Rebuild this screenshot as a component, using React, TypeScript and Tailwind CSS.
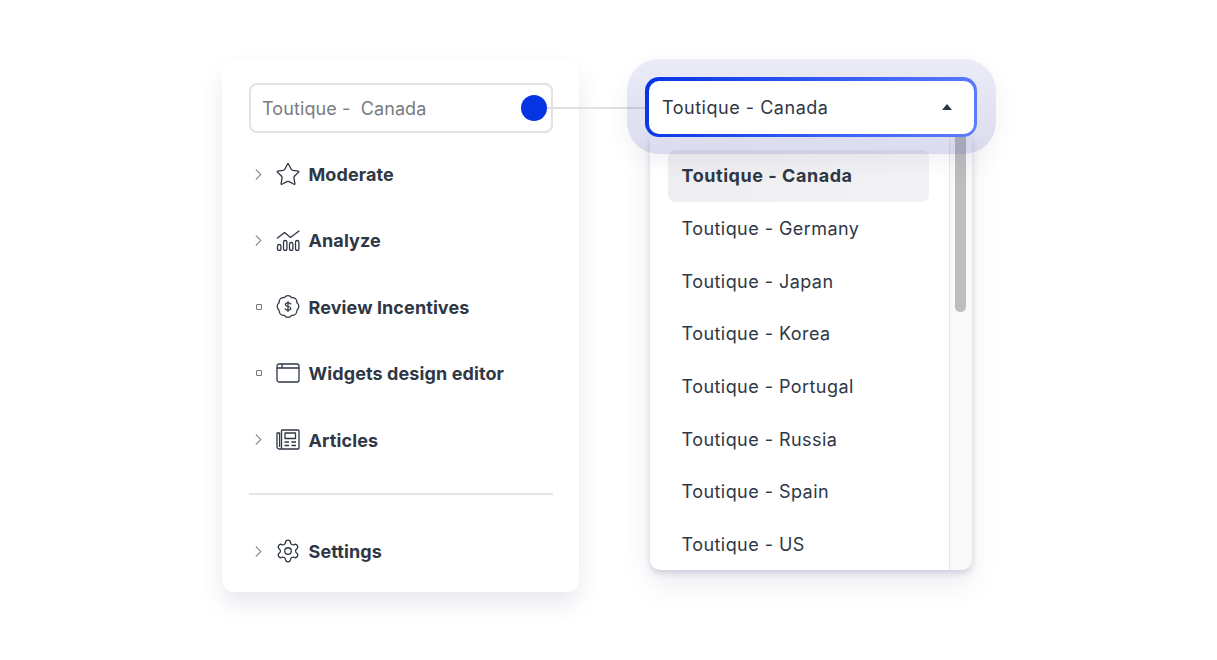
import { ChevronRight, Settings, Star } from 'lucide-react'
import type { ReactNode } from 'react'

const COUNTRIES = ['Germany', 'Japan', 'Korea', 'Portugal', 'Russia', 'Spain', 'US']

function AnalyzeIcon() {
  return (
    <svg width="24" height="21" viewBox="0 0 24 21" fill="none" stroke="#2f3745" strokeWidth="1.3" strokeLinecap="round" strokeLinejoin="round">
      <path d="M1.5 8 L8.5 2.5 L14.5 7.5 L23 1" />
      <rect x="1.5" y="14.5" width="3.4" height="6" rx="1.7" />
      <rect x="7.5" y="10.5" width="3.4" height="10" rx="1.7" />
      <rect x="13.5" y="12.5" width="3.4" height="8" rx="1.7" />
      <rect x="19.5" y="10.5" width="3.4" height="10" rx="1.7" />
    </svg>
  )
}

function BadgeIcon() {
  return (
    <svg width="27" height="27" viewBox="0 0 24 24" fill="none" stroke="#2f3745" strokeWidth="1.15" strokeLinecap="round" strokeLinejoin="round">
      <path d="M3.85 8.62a4 4 0 0 1 4.78-4.77 4 4 0 0 1 6.74 0 4 4 0 0 1 4.78 4.78 4 4 0 0 1 0 6.74 4 4 0 0 1-4.77 4.78 4 4 0 0 1-6.75 0 4 4 0 0 1-4.78-4.77 4 4 0 0 1 0-6.76Z" />
      <path d="M14.6 9.7c-.5-.7-1.4-1.1-2.6-1.1-1.4 0-2.4.6-2.4 1.7 0 2.3 5 1.1 5 3.4 0 1.1-1.1 1.7-2.6 1.7-1.2 0-2.1-.5-2.6-1.2M12 7.4v9.2" />
    </svg>
  )
}

function WindowIcon() {
  return (
    <svg width="24" height="20" viewBox="0 0 24 20" fill="none" stroke="#2f3745" strokeWidth="1.3" strokeLinejoin="round">
      <rect x="1" y="1" width="22" height="18" rx="2" />
      <path d="M1 5 H23 M6 1 V5" />
    </svg>
  )
}

function ArticlesIcon() {
  return (
    <svg width="24" height="21" viewBox="0 0 24 21" fill="none" stroke="#2f3745" strokeWidth="1.3" strokeLinejoin="round">
      <path d="M5.5 1 H22 a1 1 0 0 1 1 1 V19 a1 1 0 0 1 -1 1 H3 a2 2 0 0 1 -2 -2 V4 H3.6 V18" />
      <path d="M5.5 1 V20" />
      <rect x="9" y="4" width="10.5" height="5.5" />
      <path d="M8.5 13 H13 M15.5 13 H20 M8.5 16.5 H13 M15.5 16.5 H20" />
    </svg>
  )
}

function NavRow({ icon, label, leaf }: { icon: ReactNode; label: string; leaf?: boolean }) {
  return (
    <div className="flex h-[66.4px] items-center">
      <div className="flex w-[19px] justify-center">
        {leaf ? (
          <span className="h-[6px] w-[6px] rounded-[1px] border border-[#73777e]" />
        ) : (
          <ChevronRight size={19} strokeWidth={1.3} className="text-[#5f636b]" />
        )}
      </div>
      <div className="ml-[7px] flex w-[26px] justify-center">{icon}</div>
      <span className="ml-[7.5px] mt-[1.5px] text-[18px] font-bold leading-none tracking-[0.1px] text-[#2f3745]">{label}</span>
    </div>
  )
}

export default function App() {
  return (
    <div className="relative flex h-[660px] w-[1217px] items-start overflow-hidden bg-white pl-[222px] pt-[60px] font-['Inter',sans-serif]">
      {/* Left nav card */}
      <div className="h-[532px] w-[357px] rounded-[12px] bg-white pl-[27px] pr-[26px] pt-[23px] shadow-[0_12px_24px_-2px_rgba(70,75,130,0.14)]">
        <div className="flex h-[50px] items-center justify-between rounded-[8px] border-2 border-[#e2e2e6] pl-[11px] pr-[4px]">
          <span className="whitespace-pre text-[18px] tracking-[0.1px] text-[#797b81]">Toutique -  Canada</span>
          <span className="h-[26px] w-[26px] rounded-full bg-[#0535e3]" />
        </div>
        <div className="mt-[8px]">
          <NavRow label="Moderate" icon={<Star size={27} strokeWidth={1.2} className="text-[#2f3745]" />} />
          <NavRow label="Analyze" icon={<AnalyzeIcon />} />
          <NavRow label="Review Incentives" leaf icon={<BadgeIcon />} />
          <NavRow label="Widgets design editor" leaf icon={<WindowIcon />} />
          <NavRow label="Articles" icon={<ArticlesIcon />} />
        </div>
        <div className="mt-[20px] h-[2px] bg-[#e4e4e8]" />
        <div className="mt-[23px]">
          <NavRow label="Settings" icon={<Settings size={26} strokeWidth={1.2} className="text-[#2f3745]" />} />
        </div>
      </div>

      {/* Connector from the dot to the select */}
      <div className="absolute left-[547px] top-[107px] h-[2px] w-[98px] bg-[#dfdfe4]" />

      {/* Select + dropdown */}
      <div className="ml-[66px] mt-[17px] w-[332px]">
        <div className="relative z-10">
          <div className="absolute -bottom-[17px] -left-[18px] -right-[19px] -top-[18px] rounded-[32px] bg-[linear-gradient(180deg,rgba(75,80,195,0.11),rgba(70,75,165,0.2))] shadow-[0_8px_22px_rgba(70,75,130,0.07)]" />
          <div className="relative h-[60px] rounded-[14px] bg-[linear-gradient(110deg,#0535e3,#5f7dff)] p-[3.5px]">
            <div className="flex h-full items-center justify-between rounded-[10px] bg-white pl-[13.5px] pr-[22px]">
              <span className="text-[18px] tracking-[0.52px] text-[#2f3745]">Toutique - Canada</span>
              <span className="h-0 w-0 border-x-[5.5px] border-b-[6px] border-x-transparent border-b-[#2f3745]" />
            </div>
          </div>
        </div>
        <div className="ml-[5px] flex h-[433px] w-[322px] overflow-hidden rounded-b-[10px] bg-white shadow-[0_3px_6px_rgba(60,65,110,0.2),0_14px_28px_rgba(70,75,130,0.1)]">
          <div className="w-[299px] pl-[18px] pr-[20px] pt-[13px]">
            <div className="flex h-[52px] items-center rounded-[8px] bg-[linear-gradient(90deg,#eeeef1,#f3f3f5)] pl-[13.5px] pb-[1px] text-[18px] font-bold tracking-[0.55px] text-[#2f3745]">
              Toutique - Canada
            </div>
            {COUNTRIES.map((country) => (
              <div key={country} className="flex h-[52.7px] items-center pl-[13.5px] text-[18px] tracking-[0.45px] text-[#2f3745]">
                Toutique - {country}
              </div>
            ))}
          </div>
          <div className="flex-1 border-l border-[#e6e6ea] bg-[#f9f9fa] pl-[5px]">
            <div className="h-[175px] w-[11px] rounded-b-[5px] bg-[#bdbdbd]" />
          </div>
        </div>
      </div>
    </div>
  )
}
